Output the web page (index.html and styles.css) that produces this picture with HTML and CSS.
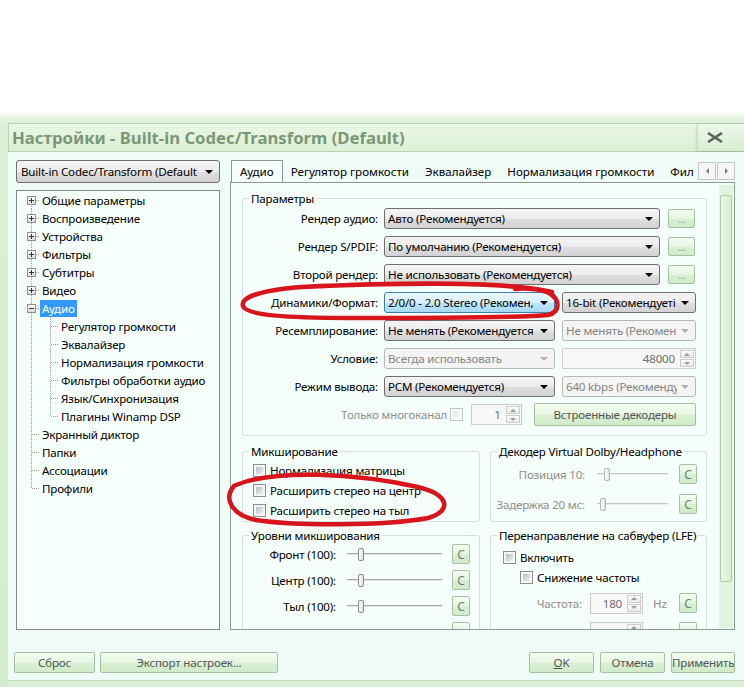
FILE: index.html
```html
<!DOCTYPE html>
<html lang="ru">
<head>
    <meta charset="UTF-8">
    <title>Настройки - Built-in Codec/Transform (Default)</title>
    <link rel="stylesheet" href="styles.css">
</head>
<body>
    <div class="window">
        <!-- заголовок окна -->
        <div class="titlebar">
            <div class="title">Настройки - Built-in Codec/Transform (Default)</div>
            <div class="close">
                <svg width="18" height="11" viewBox="0 0 18 11"><path d="M2 1 L16 10 M16 1 L2 10" stroke="#5c665c" stroke-width="2.6" fill="none"/></svg>
            </div>
        </div>

        <div class="client">
            <div class="main">
                <!-- левая колонка: фильтр + дерево -->
                <div class="side">
                    <div class="combo"><span class="ctext">Built-in Codec/Transform (Default</span><i class="arrow"></i></div>
                    <ul class="tree">
                        <li class="node first"><span class="exp plus"></span><span class="tl">Общие параметры</span></li>
                        <li class="node"><span class="exp plus"></span><span class="tl">Воспроизведение</span></li>
                        <li class="node"><span class="exp plus"></span><span class="tl">Устройства</span></li>
                        <li class="node"><span class="exp plus"></span><span class="tl">Фильтры</span></li>
                        <li class="node"><span class="exp plus"></span><span class="tl">Субтитры</span></li>
                        <li class="node"><span class="exp plus"></span><span class="tl">Видео</span></li>
                        <li class="node"><span class="exp minus"></span><span class="tl sel">Аудио</span></li>
                        <li class="branch">
                            <ul class="sub">
                                <li><span class="tl">Регулятор громкости</span></li>
                                <li><span class="tl">Эквалайзер</span></li>
                                <li><span class="tl">Нормализация громкости</span></li>
                                <li><span class="tl">Фильтры обработки аудио</span></li>
                                <li><span class="tl">Язык/Синхронизация</span></li>
                                <li class="last"><span class="tl">Плагины Winamp DSP</span></li>
                            </ul>
                        </li>
                        <li class="node leaf"><span class="tl">Экранный диктор</span></li>
                        <li class="node leaf"><span class="tl">Папки</span></li>
                        <li class="node leaf"><span class="tl">Ассоциации</span></li>
                        <li class="node leaf last"><span class="tl">Профили</span></li>
                    </ul>
                </div>

                <!-- правая колонка: вкладки -->
                <div class="pages">
                    <div class="tabs">
                        <div class="tab-list">
                            <div class="tab active">Аудио</div>
                            <div class="tab">Регулятор громкости</div>
                            <div class="tab">Эквалайзер</div>
                            <div class="tab">Нормализация громкости</div>
                            <div class="tab">Фил</div>
                        </div>
                        <div class="tab-scroll">
                            <span class="sbtn"><i class="tri-left"></i></span>
                            <span class="sbtn"><i class="tri-right"></i></span>
                        </div>
                    </div>

                    <div class="panel">
                        <div class="panel-body">
                            <fieldset class="params">
                                <legend>Параметры</legend>
                                <div class="frow">
                                    <span class="lbl">Рендер аудио:</span>
                                    <div class="combo wide"><span class="ctext">Авто (Рекомендуется)</span><i class="arrow"></i></div>
                                    <button class="btn dots">...</button>
                                </div>
                                <div class="frow">
                                    <span class="lbl">Рендер S/PDIF:</span>
                                    <div class="combo wide"><span class="ctext">По умолчанию (Рекомендуется)</span><i class="arrow"></i></div>
                                    <button class="btn dots">...</button>
                                </div>
                                <div class="frow">
                                    <span class="lbl">Второй рендер:</span>
                                    <div class="combo wide"><span class="ctext">Не использовать (Рекомендуется)</span><i class="arrow"></i></div>
                                    <button class="btn dots">...</button>
                                </div>
                                <div class="frow">
                                    <span class="lbl">Динамики/Формат:</span>
                                    <div class="combo half hot"><span class="ctext">2/0/0 - 2.0 Stereo (Рекомен,</span><i class="arrow"></i></div>
                                    <div class="combo small"><span class="ctext">16-bit (Рекомендуеті</span><i class="arrow"></i></div>
                                </div>
                                <div class="frow">
                                    <span class="lbl">Ресемплирование:</span>
                                    <div class="combo half"><span class="ctext">Не менять (Рекомендуется</span><i class="arrow"></i></div>
                                    <div class="combo small off"><span class="ctext">Не менять (Рекомен</span><i class="arrow"></i></div>
                                </div>
                                <div class="frow">
                                    <span class="lbl">Условие:</span>
                                    <div class="combo half off"><span class="ctext">Всегда использовать</span><i class="arrow"></i></div>
                                    <div class="spin small-spin"><span class="val">48000</span><span class="arrows"><span><i class="tri-up"></i></span><span><i class="tri-down"></i></span></span></div>
                                </div>
                                <div class="frow">
                                    <span class="lbl">Режим вывода:</span>
                                    <div class="combo half"><span class="ctext">PCM (Рекомендуется)</span><i class="arrow"></i></div>
                                    <div class="combo small off"><span class="ctext">640 kbps (Рекоменду</span><i class="arrow"></i></div>
                                </div>
                                <div class="frow">
                                    <span class="lbl multi off-text">Только многоканал</span>
                                    <span class="cb off"></span>
                                    <div class="spin one-spin"><span class="val">1</span><span class="arrows"><span><i class="tri-up"></i></span><span><i class="tri-down"></i></span></span></div>
                                    <button class="btn decoders">Встроенные декодеры</button>
                                </div>
                            </fieldset>

                            <div class="groups">
                                <fieldset class="mix">
                                    <legend>Микширование</legend>
                                    <div class="crow"><span class="cb"></span>Нормализация матрицы</div>
                                    <div class="crow"><span class="cb"></span>Расширить стерео на центр</div>
                                    <div class="crow"><span class="cb"></span>Расширить стерео на тыл</div>
                                </fieldset>

                                <fieldset class="dolby">
                                    <legend>Декодер Virtual Dolby/Headphone</legend>
                                    <div class="srow">
                                        <span class="slbl off-text">Позиция 10:</span>
                                        <div class="slider off"><i class="knob" style="margin-left: 7px"></i></div>
                                        <button class="btn cbtn">C</button>
                                    </div>
                                    <div class="srow">
                                        <span class="slbl off-text">Задержка 20 мс:</span>
                                        <div class="slider off"><i class="knob" style="margin-left: 3px"></i></div>
                                        <button class="btn cbtn">C</button>
                                    </div>
                                </fieldset>

                                <fieldset class="levels">
                                    <legend>Уровни микширования</legend>
                                    <div class="srow">
                                        <span class="slbl">Фронт (100):</span>
                                        <div class="slider"><i class="knob" style="margin-left: 11px"></i></div>
                                        <button class="btn cbtn">C</button>
                                    </div>
                                    <div class="srow">
                                        <span class="slbl">Центр (100):</span>
                                        <div class="slider"><i class="knob" style="margin-left: 11px"></i></div>
                                        <button class="btn cbtn">C</button>
                                    </div>
                                    <div class="srow">
                                        <span class="slbl">Тыл (100):</span>
                                        <div class="slider"><i class="knob" style="margin-left: 11px"></i></div>
                                        <button class="btn cbtn">C</button>
                                    </div>
                                    <div class="srow">
                                        <span class="slbl"></span>
                                        <div class="slider"></div>
                                        <button class="btn cbtn"></button>
                                    </div>
                                </fieldset>

                                <fieldset class="lfe">
                                    <legend>Перенаправление на сабвуфер (LFE)</legend>
                                    <div class="crow on"><span class="cb"></span>Включить</div>
                                    <div class="crow lowpass"><span class="cb"></span>Снижение частоты</div>
                                    <div class="srow freq">
                                        <span class="slbl off-text">Частота:</span>
                                        <div class="spin hz-spin"><span class="val">180</span><span class="arrows"><span><i class="tri-up"></i></span><span><i class="tri-down"></i></span></span></div>
                                        <span class="unit off-text">Hz</span>
                                        <button class="btn cbtn">C</button>
                                    </div>
                                    <div class="srow freq">
                                        <span class="slbl"></span>
                                        <div class="spin hz-spin"><span class="val"></span><span class="arrows"><span><i class="tri-up"></i></span><span><i class="tri-down"></i></span></span></div>
                                        <span class="unit"></span>
                                        <button class="btn cbtn"></button>
                                    </div>
                                </fieldset>
                            </div>
                        </div>
                        <div class="vscroll"><div class="thumb"></div></div>
                    </div>
                </div>
            </div>

            <!-- кнопки внизу -->
            <div class="buttons">
                <button class="btn b-reset">Сброс</button>
                <button class="btn b-export">Экспорт настроек...</button>
                <span class="spacer"></span>
                <button class="btn b-ok"><u>O</u>K</button>
                <button class="btn b-cancel">Отмена</button>
                <button class="btn b-apply">Применить</button>
            </div>
        </div>
        <div class="frame-bottom"></div>
    </div>

    <!-- красные пометки поверх скриншота -->
    <svg class="marks" width="744" height="687" viewBox="0 0 744 687">
        <path d="M552 292 C505 281 390 283 302 287 C262 290 240 297 243 306 C246 315 285 318 350 318 C430 318 515 318 548 315 C560 312 561 300 549 293 C540 289 525 288 515 289" />
        <path d="M236 485 C275 469 355 473 418 487 C450 495 452 511 428 518 C385 526 295 526 256 520 C232 515 223 499 234 486" />
    </svg>
</body>
</html>
```

FILE: styles.css
```css
/* Окно настроек */
* {
    box-sizing: border-box;
}

body {
    margin: 0;
    height: 687px;
    overflow: hidden;
    background: #fff;
    font-family: "Noto Sans", "Open Sans", sans-serif;
    font-size: 11.6px;
    letter-spacing: -0.2px;
    color: #000;
}

.window {
    margin-top: 113px;
    height: 574px;
    display: flex;
    flex-direction: column;
    padding: 10px 0 0 8px;
    background: linear-gradient(to bottom, #f6fcf4 0, #dbf0d6 10px, #d3ecce 100%);
}

.titlebar {
    height: 29px;
    display: flex;
    background: linear-gradient(to bottom, #eaf7e6, #dcf0d6);
    border: 1px solid #b8d5b1;
    border-right: 0;
}

.title {
    flex: 1;
    padding-left: 3px;
    font-weight: bold;
    font-size: 16.7px;
    letter-spacing: 0;
    line-height: 27px;
    color: #7b9776;
    white-space: nowrap;
    overflow: hidden;
}

.close {
    width: 47px;
    display: flex;
    align-items: center;
    padding-left: 8px;
    background: linear-gradient(to bottom, #eef9eb, #d6edd1);
    border-left: 1px solid #c6ddc0;
    box-shadow: 0 3px 4px rgba(90, 120, 90, 0.3);
}

.client {
    flex: 1;
    display: flex;
    flex-direction: column;
    padding: 8px 9px 7px 8px;
    background: #effbf6;
}

.frame-bottom {
    height: 7px;
    border-top: 1px solid #c8dcc4;
    background: #dcf0d8;
}

.main {
    height: 470px;
    display: flex;
    gap: 10px;
}

/* Левая колонка */
.side {
    width: 204px;
    display: flex;
    flex-direction: column;
    gap: 7px;
}

.combo {
    height: 23px;
    display: flex;
    align-items: center;
    padding: 0 6px 0 4px;
    border: 1px solid #707070;
    border-radius: 3px;
    background: linear-gradient(to bottom, #f4f4f4 0, #ececec 50%, #dfdfdf 51%, #d2d2d2 100%);
}

.ctext {
    flex: 1;
    white-space: nowrap;
    overflow: hidden;
}

.arrow {
    width: 0;
    height: 0;
    margin-left: 4px;
    border-left: 4px solid transparent;
    border-right: 4px solid transparent;
    border-top: 4px solid #000;
}

.tree {
    flex: 1;
    margin: 0;
    padding: 0;
    list-style: none;
    border: 1px solid #828790;
    background: #f6fffc;
}

.tree li {
    height: 18px;
    display: flex;
    align-items: center;
    white-space: nowrap;
}

.node {
    padding-left: 10px;
    background:
        repeating-linear-gradient(to right, #9c9c9c 0 1px, transparent 1px 2px) 15px 9px / 8px 1px no-repeat,
        repeating-linear-gradient(to bottom, #9c9c9c 0 1px, transparent 1px 2px) 14px 0 / 1px 18px no-repeat;
}

.node.first {
    background:
        repeating-linear-gradient(to right, #9c9c9c 0 1px, transparent 1px 2px) 15px 9px / 8px 1px no-repeat,
        repeating-linear-gradient(to bottom, #9c9c9c 0 1px, transparent 1px 2px) 14px 9px / 1px 9px no-repeat;
}

.node.last {
    background:
        repeating-linear-gradient(to right, #9c9c9c 0 1px, transparent 1px 2px) 15px 9px / 8px 1px no-repeat,
        repeating-linear-gradient(to bottom, #9c9c9c 0 1px, transparent 1px 2px) 14px 0 / 1px 9px no-repeat;
}

.node.leaf {
    padding-left: 23px;
}

.tree li.branch {
    height: auto;
    display: block;
    background: repeating-linear-gradient(to bottom, #9c9c9c 0 1px, transparent 1px 2px) 14px 0 / 1px 100% no-repeat;
}

.sub {
    margin: 0;
    padding: 0;
    list-style: none;
}

.sub li {
    padding-left: 42px;
    background:
        repeating-linear-gradient(to right, #9c9c9c 0 1px, transparent 1px 2px) 34px 9px / 8px 1px no-repeat,
        repeating-linear-gradient(to bottom, #9c9c9c 0 1px, transparent 1px 2px) 33px 0 / 1px 18px no-repeat;
}

.sub li.last {
    background:
        repeating-linear-gradient(to right, #9c9c9c 0 1px, transparent 1px 2px) 34px 9px / 8px 1px no-repeat,
        repeating-linear-gradient(to bottom, #9c9c9c 0 1px, transparent 1px 2px) 33px 0 / 1px 9px no-repeat;
}

.exp {
    width: 9px;
    height: 9px;
    margin-right: 4px;
    border: 1px solid #919191;
}

.exp.plus {
    background:
        linear-gradient(#333, #333) center / 5px 1px no-repeat,
        linear-gradient(#333, #333) center / 1px 5px no-repeat,
        linear-gradient(to bottom, #fdfdfd, #dcdcdc);
}

.exp.minus {
    background:
        linear-gradient(#333, #333) center / 5px 1px no-repeat,
        linear-gradient(to bottom, #fdfdfd, #dcdcdc);
}

.tl {
    padding: 0 2px;
    line-height: 17px;
}

.tl.sel {
    background: #3399ff;
    color: #fff;
}

/* Вкладки */
.pages {
    width: 505px;
    display: flex;
    flex-direction: column;
}

.tabs {
    height: 22px;
    display: flex;
}

.tab-list {
    flex: 1;
    display: flex;
    align-items: flex-end;
    padding-left: 1px;
    overflow: hidden;
}

.tab {
    height: 20px;
    padding: 0 8px;
    line-height: 19px;
    letter-spacing: 0;
    white-space: nowrap;
}

.tab.active {
    position: relative;
    z-index: 1;
    height: 23px;
    margin-bottom: -1px;
    padding: 0 8px;
    line-height: 21px;
    border: 1px solid #8c9b91;
    border-bottom: 0;
    background: #f5fefb;
}

.tab-scroll {
    display: flex;
    gap: 1px;
    padding-top: 2px;
}

.sbtn {
    width: 18px;
    height: 18px;
    display: flex;
    align-items: center;
    justify-content: center;
    border: 1px solid #c6c6c6;
    background: #f6f6f6;
}

.tri-left, .tri-right, .tri-up, .tri-down {
    width: 0;
    height: 0;
}

.tri-left {
    border-top: 3px solid transparent;
    border-bottom: 3px solid transparent;
    border-right: 3px solid #7d7d7d;
}

.tri-right {
    border-top: 3px solid transparent;
    border-bottom: 3px solid transparent;
    border-left: 3px solid #7d7d7d;
}

.tri-up {
    border-left: 3px solid transparent;
    border-right: 3px solid transparent;
    border-bottom: 3px solid #9a9a9a;
}

.tri-down {
    border-left: 3px solid transparent;
    border-right: 3px solid transparent;
    border-top: 3px solid #9a9a9a;
}

.panel {
    height: 448px;
    display: flex;
    border: 1px solid #8c9b91;
    background: #f5fefb;
}

.panel-body {
    flex: 1;
    overflow: hidden;
    padding: 7px 12px 0 11px;
}

.vscroll {
    width: 14px;
    margin: 2px 1px 1px 0;
    padding: 10px 1px;
    background: #e1f4dd;
}

.thumb {
    height: 387px;
    border: 1px solid #b2cbae;
    border-radius: 2px;
    background: linear-gradient(to right, #eaf8e6, #d7efd2);
}

/* Группы */
fieldset {
    min-width: 0;
    margin: 0;
    border: 1px solid #d3dde2;
    border-radius: 3px;
}

legend {
    margin-left: 6px;
    padding: 0 2px;
    line-height: 17px;
    white-space: nowrap;
}

.params {
    padding: 1px 10px 10px 0;
}

.frow {
    height: 21px;
    display: flex;
    align-items: center;
    margin-bottom: 7px;
}

.frow:last-child {
    margin-bottom: 0;
}

.lbl {
    width: 135px;
    margin-right: 6px;
    text-align: right;
    white-space: nowrap;
}

.lbl.multi {
    width: 205px;
    margin-right: 3px;
}

.off-text {
    color: #8e8e8e;
}

.frow .combo {
    height: 21px;
    padding-left: 3px;
}

.combo.wide {
    width: 276px;
}

.combo.half {
    width: 171px;
}

.combo.small {
    width: 134px;
    margin-left: 7px;
}

.combo.hot {
    border-color: #3c7fb1;
    background: linear-gradient(to bottom, #eaf6fd 0, #d9f0fc 50%, #bee6fd 51%, #a7d9f5 100%);
}

.combo.off {
    border-color: #b3b8bb;
    background: #f4f4f4;
    color: #858585;
}

.combo.off .arrow {
    border-top-color: #b0b0b0;
}

.btn {
    font-family: inherit;
    font-size: 11.6px;
    letter-spacing: -0.2px;
    color: #555;
    padding: 0;
    border: 1px solid #a5c2a0;
    border-radius: 2px;
    background: linear-gradient(to bottom, #f3fcf1 0, #e6f6e2 50%, #d8f0d3 51%, #d0ebca 100%);
}

.btn.dots {
    width: 27px;
    height: 19px;
    margin-left: 8px;
    font-size: 10px;
    color: #8a9a8a;
}

.btn.decoders {
    width: 163px;
    height: 23px;
    margin-left: 12px;
}

.cb {
    width: 13px;
    height: 13px;
    flex: none;
    padding: 2px;
    border: 1px solid #8e8f8f;
    background: linear-gradient(135deg, #b9bdc1, #efefef) content-box, #f6f6f6;
}

.cb.off {
    border-color: #c4c4c4;
    background: linear-gradient(135deg, #e6e6e6, #f8f8f8) content-box, #fafafa;
}

.spin {
    height: 21px;
    display: flex;
    border: 1px solid #c9cbcd;
    background: #f8f8f8;
}

.spin .val {
    flex: 1;
    padding-right: 4px;
    text-align: right;
    line-height: 19px;
    color: #6c6c6c;
}

.spin .arrows {
    width: 16px;
    display: flex;
    flex-direction: column;
    gap: 1px;
    padding: 1px;
}

.spin .arrows span {
    flex: 1;
    display: flex;
    align-items: center;
    justify-content: center;
    border: 1px solid #cdcdcd;
    background: linear-gradient(to bottom, #fbfbfb, #e9e9e9);
}

.small-spin {
    width: 134px;
    margin-left: 7px;
}

.one-spin {
    width: 51px;
    margin-left: 8px;
}

.groups {
    display: grid;
    grid-template-columns: 238px 217px;
    column-gap: 10px;
    row-gap: 5px;
    margin-top: 7px;
}

.crow {
    height: 20px;
    display: flex;
    align-items: center;
    gap: 4px;
    white-space: nowrap;
}

.mix {
    padding: 0 6px 1px 0;
}

.mix .crow {
    padding-left: 10px;
}

.lfe {
    padding: 3px 6px 0 0;
}

.lfe .on {
    padding-left: 12px;
}

.lfe .lowpass {
    padding-left: 29px;
}

.srow {
    height: 20px;
    display: flex;
    align-items: center;
    white-space: nowrap;
}

.slbl {
    text-align: right;
}

.slider {
    height: 20px;
    display: flex;
    align-items: center;
    background:
        linear-gradient(#a9a9a9, #a9a9a9) 0 9px / 100% 1px no-repeat,
        linear-gradient(#e4e4e4, #e4e4e4) 0 10px / 100% 1px no-repeat;
}

.slider.off {
    background:
        linear-gradient(#c4c4c4, #c4c4c4) 0 9px / 100% 1px no-repeat,
        linear-gradient(#ececec, #ececec) 0 10px / 100% 1px no-repeat;
}

.knob {
    width: 6px;
    height: 13px;
    border: 1px solid #8a8a8a;
    border-radius: 2px;
    background: linear-gradient(to right, #fdfdfd, #e2e2e2);
}

.slider.off .knob {
    border-color: #b4b4b4;
}

.btn.cbtn {
    width: 18px;
    height: 20px;
    flex: none;
    font-size: 12px;
    color: #6f7f6f;
}

.dolby {
    padding: 4px 6px 7px 0;
}

.dolby .srow + .srow {
    margin-top: 10px;
}

.dolby .slbl {
    width: 94px;
}

.dolby .slider {
    width: 71px;
    margin: 0 11px 0 12px;
}

.levels {
    padding: 0 6px 6px 0;
}

.levels .srow + .srow {
    margin-top: 6px;
}

.levels .slbl {
    width: 93px;
}

.levels .slider {
    width: 95px;
    margin: 0 10px 0 11px;
}

.lfe .freq {
    margin-top: 6px;
}

.lfe .freq + .freq {
    margin-top: 9px;
}

.lfe .slbl {
    width: 91px;
}

.hz-spin {
    width: 53px;
    margin-left: 8px;
}

.unit {
    width: 36px;
    padding-left: 10px;
}

/* Нижние кнопки */
.buttons {
    height: 21px;
    margin-top: 22px;
    margin-left: -2px;
    display: flex;
    gap: 6px;
}

.buttons .btn {
    height: 21px;
}

.spacer {
    flex: 1;
}

.b-reset {
    width: 81px;
}

.b-export {
    width: 178px;
    margin-left: -1px;
}

.b-ok {
    width: 65px;
}

.b-cancel {
    width: 65px;
}

.b-apply {
    width: 64px;
}

/* Пометки маркером */
.marks {
    position: absolute;
    top: 0;
    left: 0;
    pointer-events: none;
}

.marks path {
    fill: none;
    stroke: #d8141c;
    stroke-width: 4.5;
    stroke-linecap: round;
    stroke-linejoin: round;
}
```
